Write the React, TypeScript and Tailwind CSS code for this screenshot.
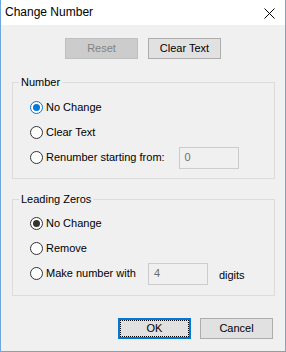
import { useState } from 'react';

function Radio({ checked, focused }: { checked: boolean; focused?: boolean }) {
  return (
    <span
      className={`flex h-[13px] w-[13px] shrink-0 items-center justify-center rounded-full border bg-white ${
        focused ? 'border-[#0078d7]' : 'border-[#333333]'
      }`}
    >
      {checked && (
        <span className={`h-[7px] w-[7px] rounded-full ${focused ? 'bg-[#0078d7]' : 'bg-[#333333]'}`} />
      )}
    </span>
  );
}

function Option({
  label,
  checked,
  focused,
  onSelect,
  children,
}: {
  label: string;
  checked: boolean;
  focused?: boolean;
  onSelect: () => void;
  children?: React.ReactNode;
}) {
  return (
    <label className="flex h-[25px] items-center pl-[17px]" onClick={onSelect}>
      <Radio checked={checked} focused={focused} />
      <span className="ml-[3px]">{label}</span>
      {children}
    </label>
  );
}

function DisabledField({ value }: { value: string }) {
  return (
    <div className="flex h-[22px] w-[60px] items-center border border-[#cccccc] bg-[#f0f0f0] pl-[5px] text-[#6d6d6d]">
      {value}
    </div>
  );
}

export default function App() {
  const [numberMode, setNumberMode] = useState('none');
  const [zerosMode, setZerosMode] = useState('none');

  return (
    <div
      className="flex h-[352px] w-[286px] flex-col border-x border-b border-[#6ea6de] bg-[#f0f0f0] text-[11px] leading-[13px] text-black"
      style={{ fontFamily: '"Liberation Sans", Arial, sans-serif' }}
    >
      {/* title bar */}
      <div className="flex h-[25px] shrink-0 items-center justify-between bg-white pl-[4px] pr-[10px] text-[12px]">
        <span>Change Number</span>
        <svg width="11" height="11" viewBox="0 0 11 11" className="mt-[1px]">
          <path d="M0.5 0.5 L10.5 10.5 M10.5 0.5 L0.5 10.5" stroke="#000" strokeWidth="1" fill="none" />
        </svg>
      </div>

      <div className="mt-[13px] flex justify-center gap-[10px]">
        <button className="h-[21px] w-[73px] border border-[#bfbfbf] bg-[#cccccc] text-[#838383]" disabled>
          Reset
        </button>
        <button className="h-[21px] w-[73px] border border-[#adadad] bg-[#e1e1e1]">Clear Text</button>
      </div>

      <fieldset className="ml-[11px] mr-[10px] mt-[17px] border border-[#dcdcdc] pb-[8px]">
        <legend className="ml-[6px] px-[2px] leading-[13px]">Number</legend>
        <div className="pt-[6px]">
          <Option label="No Change" checked={numberMode === 'none'} focused onSelect={() => setNumberMode('none')} />
          <Option label="Clear Text" checked={numberMode === 'clear'} onSelect={() => setNumberMode('clear')} />
          <Option
            label="Renumber starting from:"
            checked={numberMode === 'renumber'}
            onSelect={() => setNumberMode('renumber')}
          >
            <div className="ml-[14px]">
              <DisabledField value="0" />
            </div>
          </Option>
        </div>
      </fieldset>

      <fieldset className="ml-[11px] mr-[10px] mt-[14px] border border-[#dcdcdc] pb-[9px]">
        <legend className="ml-[6px] px-[2px] leading-[13px]">Leading Zeros</legend>
        <div className="pt-[5px]">
          <Option label="No Change" checked={zerosMode === 'none'} onSelect={() => setZerosMode('none')} />
          <Option label="Remove" checked={zerosMode === 'remove'} onSelect={() => setZerosMode('remove')} />
          <Option label="Make number with" checked={zerosMode === 'pad'} onSelect={() => setZerosMode('pad')}>
            <div className="ml-[12px]">
              <DisabledField value="4" />
            </div>
            <span className="ml-[11px] mt-[4px]">digits</span>
          </Option>
        </div>
      </fieldset>

      <div className="mt-[22px] flex justify-end gap-[9px] pr-[12px]">
        <button className="relative h-[21px] w-[73px] border-2 border-[#0078d7] bg-[#e1e1e1]">
          <span className="absolute inset-0 border border-dotted border-black" />
          <span className="relative">OK</span>
        </button>
        <button className="h-[21px] w-[73px] border border-[#adadad] bg-[#e1e1e1]">Cancel</button>
      </div>
    </div>
  );
}
